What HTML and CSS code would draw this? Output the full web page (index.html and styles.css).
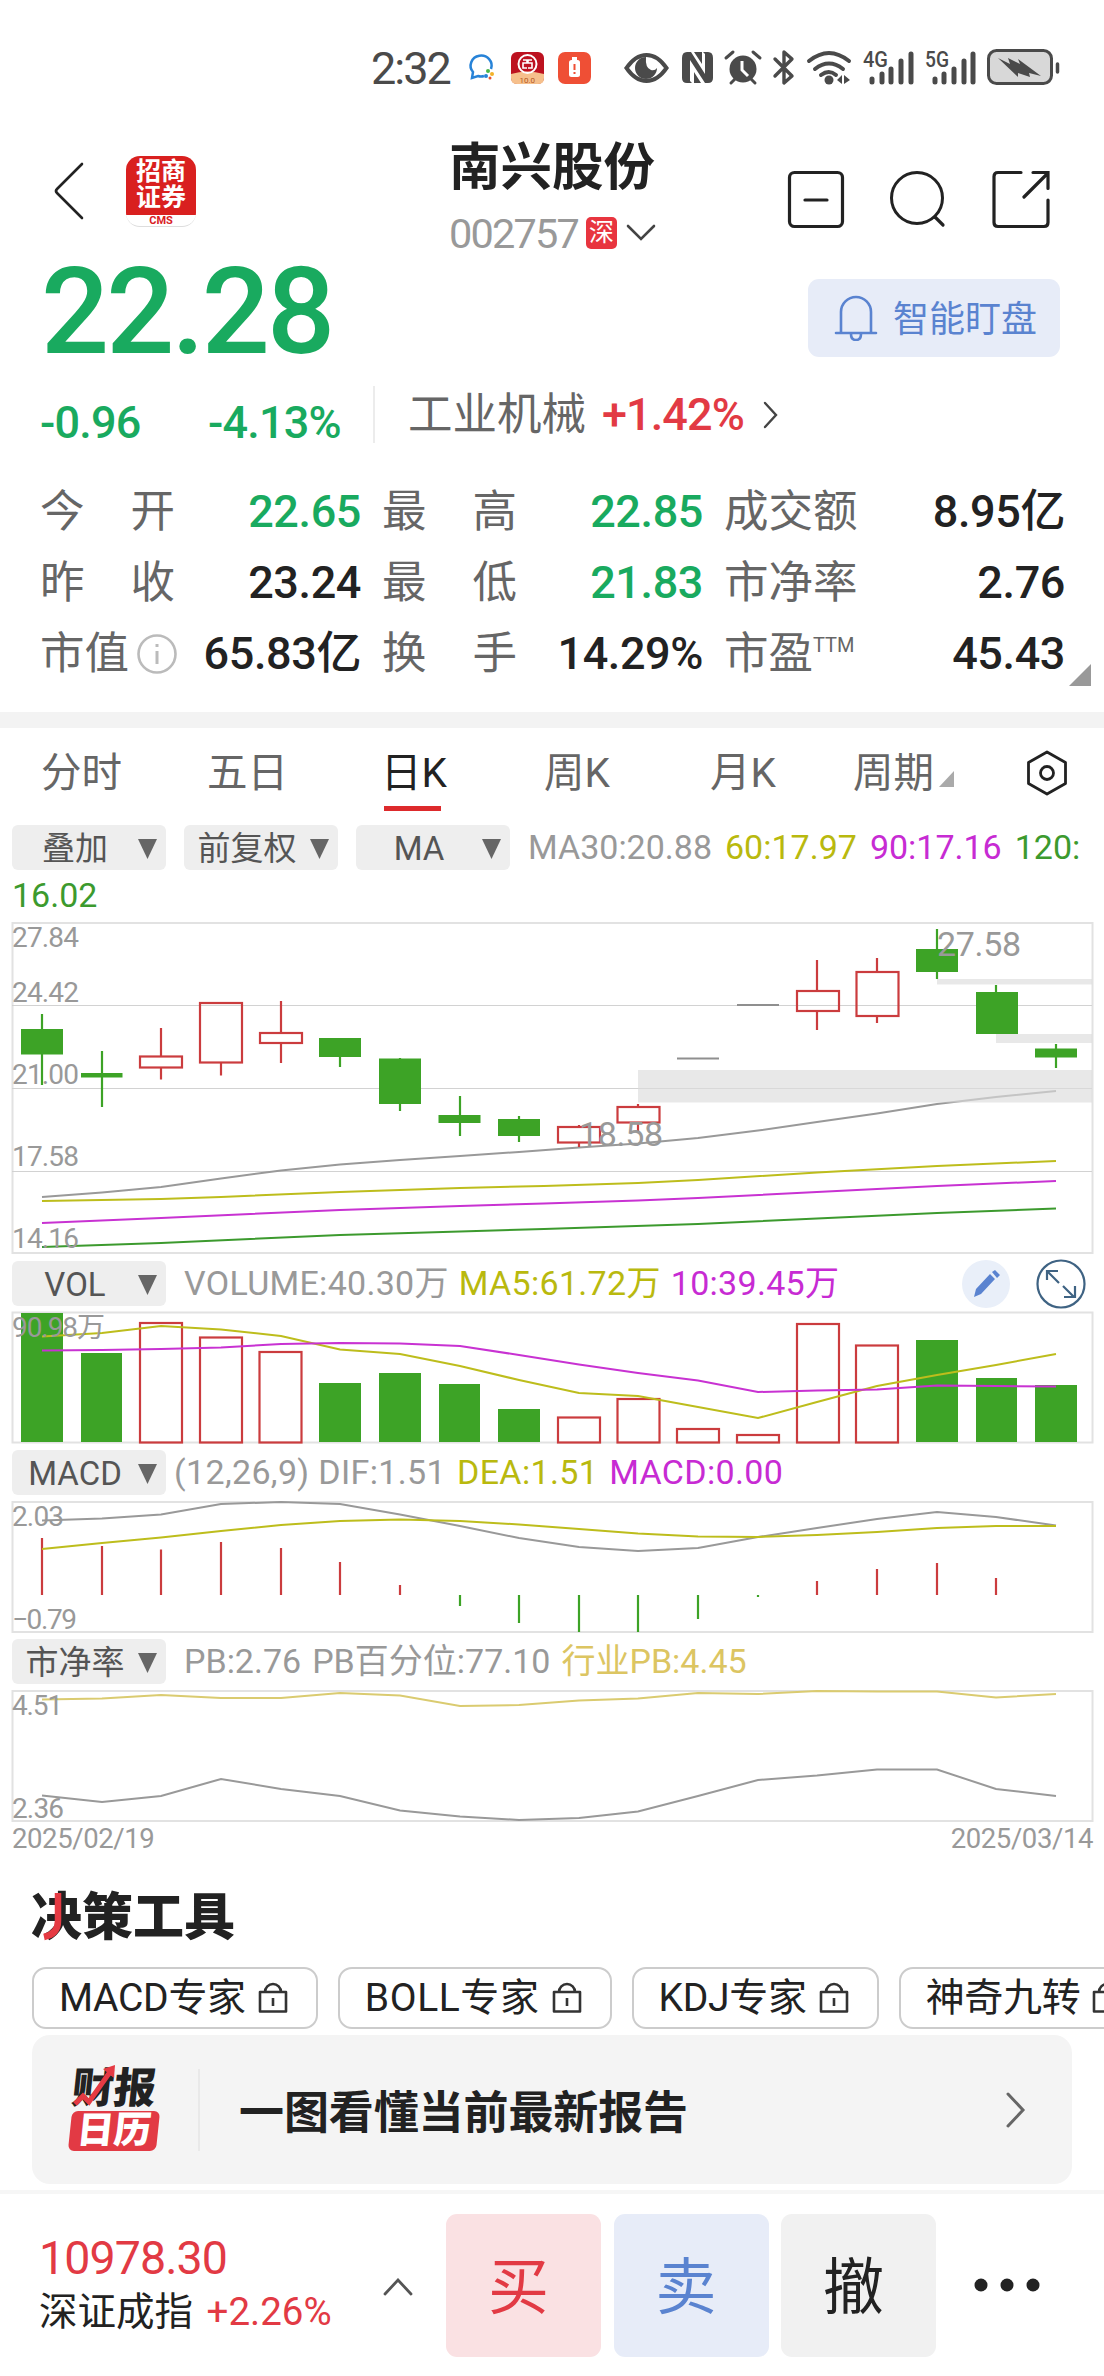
FILE: index.html
```html
<!DOCTYPE html>
<html lang="zh-CN">
<head>
  <meta charset="UTF-8">
  <title>南兴股份 002757</title>
  <link rel="stylesheet" href="styles.css">
</head>
<body>
  <!-- 状态栏 -->
  <div class="status-bar">
    <span class="time">2:32</span>
    <svg width="688" height="56" viewBox="372 36 688 56">
      <!-- 消息 -->
      <path d="M484 76q-3 1-6 0l-6 2 1-6a10.500 10 0 1 1 18-3" fill="none" stroke="#2783d8" stroke-width="2.500"/>
      <circle cx="488" cy="71" r="2" fill="#4bb748"/><circle cx="492" cy="74" r="2" fill="#f3b229"/><circle cx="486" cy="76" r="2" fill="#2783d8"/><circle cx="490" cy="78" r="1.500" fill="#e6502e"/>
      <!-- 银行 -->
      <rect x="511" y="52" width="33" height="32" rx="6" fill="#bd1220"/>
      <path d="M511 74q16-5 33 0v4q0 6-6 6h-21q-6 0-6-6z" fill="#f6c08c"/>
      <circle cx="527.500" cy="64" r="9" fill="none" stroke="#fff" stroke-width="2"/>
      <path d="M523 60h4v3h-4v5h4M532 60h-4v3h4v5h-4" fill="none" stroke="#fff" stroke-width="1.600"/>
      <text x="519.500" y="83" class="mini">10.0</text>
      <!-- 电量提醒 -->
      <rect x="558" y="52" width="33" height="32" rx="7" fill="#ef4f35"/>
      <rect x="569" y="60" width="11" height="17" rx="2.500" fill="#fff"/><rect x="572" y="57" width="5" height="4" fill="#fff"/>
      <path d="M574.500 64v6M574.500 72v2" stroke="#ef4f35" stroke-width="2"/>
      <g fill="#4a4a4a">
        <path fill-rule="evenodd" d="M624 68q10-15 22.500-15t22.500 15q-10 15-22.500 15t-22.500-15zm5 0q8 11 17.500 11t17.500-11q-8-11-17.500-11t-17.500 11z"/>
        <path d="M646 57a11 11 0 1 0 11 11q-2 3-6 2-6-2-5-13z"/>
        <!-- NFC -->
        <path d="M687 52h4l14 22V54l-2-2h5q5 0 5 6v20q0 5-5 5h-3l-15-23v21l2 2h-5q-5 0-5-5V58q0-6 5-6z"/>
        <path d="M694 52h8v12zM694 83h7l-7-11z"/>
        <!-- 闹钟 -->
        <circle cx="743" cy="69" r="13.500"/>
        <path d="M726 58l7-6M760 58l-7-6M731 83l4-4M755 83l-4-4" stroke="#4a4a4a" stroke-width="3" stroke-linecap="round"/>
        <path d="M742 61v9l6 6" fill="none" stroke="#fff" stroke-width="3"/>
      </g>
      <g fill="none" stroke="#4a4a4a" stroke-width="3.400" stroke-linejoin="round" stroke-linecap="round">
        <path d="M775 59l17 17-8 7V52l8 7-17 17"/>
        <path d="M809 61q20-16 40 0M815 69q14-11 28 0M821 75q8-6 15 0" stroke-width="4"/>
      </g>
      <g fill="#4a4a4a">
        <circle cx="829" cy="80" r="4.500"/><path d="M837 80l5-5v9zM850 80l-6-5v9z"/>
      </g>
      <g stroke="#4a4a4a" stroke-width="5" stroke-linecap="round">
        <path d="M872 79v3M882 74v8M891 69v13M901 61v21M911 54v28"/>
        <path d="M935 79v3M944 74v8M954 69v13M964 61v21M973 54v28"/>
      </g>
      <text x="863" y="67" class="net" textLength="25" lengthAdjust="spacingAndGlyphs">4G</text>
      <text x="925" y="67" class="net" textLength="24" lengthAdjust="spacingAndGlyphs">5G</text>
      <rect x="988.500" y="50.500" width="63" height="33" rx="8" fill="#d8d8d8" stroke="#4a4a4a" stroke-width="3"/>
      <path d="M998 58l12 6-2-6 12 6-2-5 23 17-12-3 1 4-12-4 0 4z" fill="#4a4a4a"/>
      <path d="M1057.500 64v8" stroke="#4a4a4a" stroke-width="3.500" stroke-linecap="round"/>
    </svg>
  </div>

  <!-- 顶部标题 -->
  <div class="header">
    <div class="header-left">
      <svg class="back" width="32" height="60" viewBox="0 0 32 60"><path d="M29 3L4 28q-2 2 0 4L29 57" fill="none" stroke="#222" stroke-width="2.600" stroke-linecap="round"/></svg>
      <div class="broker">
        <div class="broker-name">招商<br>证券</div>
        <div class="broker-en">CMS</div>
      </div>
    </div>
    <div class="header-title">
      <h1>南兴股份</h1>
      <div class="code"><span class="code-num">002757</span><span class="badge">深</span>
        <svg width="30" height="18" viewBox="0 0 30 18"><path d="M2 2l13 13L28 2" fill="none" stroke="#444" stroke-width="2.600" stroke-linecap="round"/></svg>
      </div>
    </div>
    <div class="header-actions">
      <svg width="58" height="60" viewBox="0 0 58 60"><rect x="2.500" y="2.500" width="53" height="54" rx="5" fill="none" stroke="#222" stroke-width="3.200"/><path d="M18 30h22" stroke="#222" stroke-width="3.200" stroke-linecap="round"/></svg>
      <svg width="58" height="60" viewBox="0 0 58 60"><circle cx="28" cy="28" r="25.500" fill="none" stroke="#222" stroke-width="3"/><path d="M46 47l8 8" stroke="#222" stroke-width="3.200" stroke-linecap="round"/></svg>
      <svg width="60" height="60" viewBox="0 0 60 60"><path d="M30 2.500H7q-4 0-4 4v46q0 4 4 4h46q4 0 4-4V30M42 2.500h15v16M56 4L33 27" fill="none" stroke="#222" stroke-width="3.200" stroke-linecap="round"/></svg>
    </div>
  </div>

  <!-- 价格 -->
  <div class="price-row">
    <div class="price">22.28</div>
    <button class="watch" type="button">
      <svg width="44" height="46" viewBox="0 0 44 46"><path d="M7 37V17a15 15 0 0 1 30 0v20M2 38h40M17 39q0 6 5 6t5-6" fill="none" stroke="#5a83d0" stroke-width="2.600" stroke-linecap="round"/></svg>
      <span>智能盯盘</span>
    </button>
  </div>
  <div class="change-row">
    <span class="change down">-0.96</span>
    <span class="change-pct down">-4.13%</span>
    <a class="sector">
      <span class="sector-name">工业机械</span>
      <span class="sector-pct">+1.42%</span>
      <svg width="16" height="28" viewBox="0 0 16 28"><path d="M2 2l11 12L2 26" fill="none" stroke="#444" stroke-width="2.400" stroke-linecap="round"/></svg>
    </a>
  </div>

  <!-- 行情数据 -->
  <div class="stats">
    <div class="stat"><span class="label"><span>今</span><span>开</span></span><b class="down">22.65</b></div>
    <div class="stat"><span class="label"><span>最</span><span>高</span></span><b class="down">22.85</b></div>
    <div class="stat"><span class="label"><span>成交额</span></span><b>8.95亿</b></div>
    <div class="stat"><span class="label"><span>昨</span><span>收</span></span><b>23.24</b></div>
    <div class="stat"><span class="label"><span>最</span><span>低</span></span><b class="down">21.83</b></div>
    <div class="stat"><span class="label"><span>市净率</span></span><b>2.76</b></div>
    <div class="stat"><span class="label"><span>市值</span>
      <svg width="42" height="42" viewBox="0 0 42 42"><circle cx="21" cy="21" r="18.500" fill="none" stroke="#bbb" stroke-width="2.600"/><path d="M21 18v13M21 11v3" stroke="#bbb" stroke-width="3"/></svg>
    </span><b>65.83亿</b></div>
    <div class="stat"><span class="label"><span>换</span><span>手</span></span><b>14.29%</b></div>
    <div class="stat"><span class="label"><span>市盈</span><span class="ttm">TTM</span></span><b>45.43</b></div>
    <span class="more-corner"></span>
  </div>

  <!-- 周期切换 -->
  <div class="tabs">
    <span class="tab">分时</span>
    <span class="tab">五日</span>
    <span class="tab active">日K</span>
    <span class="tab">周K</span>
    <span class="tab">月K</span>
    <span class="tab">周期<i class="corner"></i></span>
    <svg width="44" height="48" viewBox="0 0 44 48"><path d="M22 3l18.500 10.500v21L22 45 3.500 34.500v-21z" fill="none" stroke="#222" stroke-width="2.800" stroke-linejoin="round"/><circle cx="22" cy="24" r="6.500" fill="none" stroke="#222" stroke-width="2.800"/></svg>
  </div>

  <!-- K线 -->
  <div class="indicator">
    <span class="chip">叠加</span>
    <span class="chip">前复权</span>
    <span class="chip">MA</span>
    <div class="values"><span class="gray">MA30:20.88</span><span class="yellow">60:17.97</span><span class="purple">90:17.16</span><span class="green">120:</span></div>
  </div>
  <div class="indicator-wrap green">16.02</div>
  <svg class="chart" width="1104" height="341" viewBox="0 920 1104 341">
    <rect x="12.500" y="923" width="1080" height="330" class="frame"/>
    <path d="M12 1005.500h1080M12 1088.500h1080M12 1171.500h1080" class="grid"/>
    <polyline class="ma gray-line" points="42,1197 102,1192.500 161,1187 221,1178.500 281,1170.500 340,1164.500 400,1160 460,1156 519,1152 579,1147.500 638,1143.500 698,1138 758,1130.500 817,1122 877,1113.500 937,1104 996,1097 1056,1091"/>
    <polyline class="ma yellow-line" points="42,1201 161,1199 221,1197 340,1192 460,1188 544,1186 638,1183 698,1180 817,1172.500 937,1166 1056,1161"/>
    <polyline class="ma purple-line" points="42,1223 161,1218 340,1210 460,1206 544,1203.500 638,1200.500 698,1198 817,1192 937,1186 1056,1181"/>
    <polyline class="ma green-line" points="42,1247 161,1243 340,1235 460,1231.500 544,1229 698,1224 817,1218.500 937,1213 1056,1208.500"/>
    <!-- 跳空缺口 -->
    <g class="gap">
      <rect x="638" y="1070" width="454" height="32.500"/>
      <rect x="937" y="979" width="155" height="5.500"/>
      <rect x="996" y="1034" width="96" height="9"/>
    </g>
    <g class="up">
      <path d="M161 1028v28.500M161 1067.500v12M221 1062.500v13M281 1001v32M281 1043v20M579 1125v2M579 1142v5M638 1104v3M638 1122.500v9.500M817 960v31M817 1011v19M877 958v14M877 1016v7"/>
      <rect x="140" y="1056.500" width="42" height="11"/>
      <rect x="200" y="1003" width="42" height="59.500"/>
      <rect x="260" y="1033" width="42" height="10"/>
      <rect x="558" y="1127" width="42" height="15.500"/>
      <rect x="617.500" y="1107" width="42" height="15.500"/>
      <rect x="797" y="991" width="42" height="20"/>
      <rect x="856.500" y="972" width="42" height="44"/>
    </g>
    <g class="dn">
      <path d="M42 1014v71M102 1051v56M340 1040v27M400 1058v53M460 1096v40M519 1116v26M937 929v50M996 985v40M1056 1044v24"/>
      <rect x="21" y="1029" width="42" height="25.500"/>
      <rect x="81" y="1073" width="41.500" height="4.500"/>
      <rect x="319" y="1038" width="42" height="19"/>
      <rect x="379" y="1058.500" width="42" height="45.500"/>
      <rect x="438.500" y="1115" width="42" height="8"/>
      <rect x="498" y="1119" width="42" height="17"/>
      <rect x="916" y="949" width="42" height="23"/>
      <rect x="976" y="992" width="42" height="42"/>
      <rect x="1035" y="1048.500" width="42" height="9"/>
    </g>
    <path d="M677 1058.500h42M737 1005h42" stroke="#8f8f8f" stroke-width="2"/>
    <g class="axis">
      <text x="12" y="947" textLength="67">27.84</text>
      <text x="12" y="1002" textLength="67">24.42</text>
      <text x="12" y="1084" textLength="67">21.00</text>
      <text x="12" y="1166" textLength="67">17.58</text>
      <text x="12" y="1248" textLength="67">14.16</text>
    </g>
    <text class="extreme" x="937" y="956" textLength="84">27.58</text>
    <text class="extreme" x="579" y="1146" textLength="84">18.58</text>
  </svg>

  <!-- 成交量 -->
  <div class="indicator">
    <span class="chip">VOL</span>
    <div class="values vol"><span class="gray">VOLUME:40.30万</span><span class="yellow">MA5:61.72万</span><span class="purple">10:39.45万</span></div>
    <div class="tools">
      <svg width="48" height="48" viewBox="0 0 48 48"><circle cx="24" cy="24" r="24" fill="#e9eff9"/><path d="M12 37l2-8 14-15 5 5-14 15zM30 12l3-2 5 5-3 3z" fill="#5a83d0"/></svg>
      <svg width="50" height="50" viewBox="0 0 50 50"><g fill="none" stroke="#3f6383" stroke-width="2.200"><circle cx="25" cy="25" r="23.500"/><path d="M11 21v-9h11M12 13l11 11M27 27l11 11M39 27v11H28"/></g></svg>
    </div>
  </div>
  <svg class="chart" width="1104" height="144" viewBox="0 1306 1104 144">
    <rect x="12.500" y="1312.500" width="1080" height="130" class="frame"/>
    <g class="dn">
      <rect x="21" y="1313" width="42" height="129"/><rect x="81" y="1353" width="41" height="89"/>
      <rect x="319" y="1383" width="42" height="59"/><rect x="379" y="1373" width="42" height="69"/><rect x="439" y="1384" width="41" height="58"/><rect x="498" y="1409" width="42" height="33"/>
      <rect x="916" y="1340" width="42" height="102"/><rect x="976" y="1378" width="41" height="64"/><rect x="1035" y="1385" width="42" height="57"/>
    </g>
    <g class="up">
      <rect x="140" y="1323" width="42" height="119.500"/><rect x="200" y="1337.500" width="42" height="105"/><rect x="259.500" y="1352" width="42" height="90.500"/>
      <rect x="558" y="1417.500" width="42" height="25"/><rect x="617.500" y="1399" width="42" height="43.500"/><rect x="677" y="1429" width="42" height="13.500"/><rect x="737" y="1435" width="42" height="7.500"/>
      <rect x="797" y="1324" width="42" height="118.500"/><rect x="856" y="1345.500" width="42" height="97"/>
    </g>
    <polyline class="ma yellow-line" points="42,1336.500 102,1333 161,1326 221,1329.500 281,1336 340,1349.500 400,1354 460,1366 519,1380 579,1393 638,1396 698,1407 758,1418 817,1402 877,1386 937,1375 996,1365 1056,1354"/>
    <polyline class="ma purple-line" points="42,1350.500 102,1350 161,1349 221,1347.500 281,1344 340,1343 400,1343.500 460,1346 519,1355 579,1364.500 638,1373 698,1380.500 758,1392 817,1390.500 877,1389.500 937,1385.500 996,1386 1056,1386.500"/>
    <text class="axis" x="12" y="1337" textLength="93">90.98万</text>
  </svg>

  <!-- MACD -->
  <div class="indicator">
    <span class="chip">MACD</span>
    <div class="values macd"><span class="gray">(12,26,9) DIF:1.51</span><span class="yellow">DEA:1.51</span><span class="purple">MACD:0.00</span></div>
  </div>
  <svg class="chart" width="1104" height="144" viewBox="0 1495 1104 144">
    <rect x="12.500" y="1502" width="1080" height="130" class="frame"/>
    <path class="up" d="M42 1595v-57M102 1595v-49M161 1595v-45.500M221 1595v-53M281 1595v-47M340 1595v-33M400 1595v-10M817 1595v-14M877 1595v-26M937 1595v-32M996 1595v-17"/>
    <path class="dn" d="M460 1595v11M519 1595v28M579 1595v37M638 1595v37M698 1595v24M758 1595v2"/>
    <polyline class="ma gray-line" points="42,1520.500 102,1518.500 161,1514.500 221,1504 281,1502 340,1504 400,1514.500 460,1526 519,1538 579,1547 638,1551 698,1548 758,1537 817,1528 877,1519 937,1512 996,1517 1056,1525.500"/>
    <polyline class="ma yellow-line" points="42,1549 102,1543 161,1537.500 221,1531 281,1525 340,1521 400,1519.500 460,1521 519,1524.500 579,1529 638,1533.500 698,1536.500 758,1537 817,1535 877,1532 937,1528 996,1526 1056,1526"/>
    <text class="axis" x="12" y="1526" textLength="52">2.03</text>
    <text class="axis" x="12" y="1629" textLength="65">−0.79</text>
  </svg>

  <!-- 市净率 -->
  <div class="indicator">
    <span class="chip">市净率</span>
    <div class="values pb"><span class="gray">PB:2.76</span><span class="gray">PB百分位:77.10</span><span class="gold">行业PB:4.45</span></div>
  </div>
  <svg class="chart" width="1104" height="140" viewBox="0 1684 1104 140">
    <rect x="12.500" y="1691" width="1080" height="130" class="frame"/>
    <polyline class="ma gold-line" points="42,1699.500 102,1698.500 161,1695 221,1698 281,1698 340,1693 400,1695.500 460,1706 519,1705 579,1700.500 638,1698.500 698,1693 758,1694 817,1691 877,1691.500 937,1691.500 996,1697.500 1056,1694"/>
    <polyline class="ma gray-line" points="42,1795.500 102,1802 161,1796 221,1779 281,1789 340,1796 400,1810.500 460,1816.500 519,1820 579,1818 638,1811.500 698,1796 758,1780 817,1775.500 877,1769.500 937,1769.500 996,1789 1056,1796"/>
    <text class="axis" x="12" y="1715" textLength="51">4.51</text>
    <text class="axis" x="12" y="1818" textLength="52">2.36</text>
  </svg>
  <div class="dates"><span>2025/02/19</span><span>2025/03/14</span></div>

  <!-- 决策工具 -->
  <h2 class="tools-title">决策工具
    <svg class="tools-stroke" width="20" height="50" viewBox="0 0 20 50"><path d="M15 0v28q0 13-14 16" fill="none" stroke="#e53a43" stroke-width="6.500"/></svg>
  </h2>
  <div class="experts">
    <span class="expert">MACD专家<svg class="lock" viewBox="0 0 30 34"><path d="M2 12h26v19.500H2zM7 12a8 8 0 0 1 16 0M15 18v8"/></svg></span>
    <span class="expert boll">BOLL专家<svg class="lock" viewBox="0 0 30 34"><path d="M2 12h26v19.500H2zM7 12a8 8 0 0 1 16 0M15 18v8"/></svg></span>
    <span class="expert">KDJ专家<svg class="lock" viewBox="0 0 30 34"><path d="M2 12h26v19.500H2zM7 12a8 8 0 0 1 16 0M15 18v8"/></svg></span>
    <span class="expert">神奇九转<svg class="lock" viewBox="0 0 30 34"><path d="M2 12h26v19.500H2zM7 12a8 8 0 0 1 16 0M15 18v8"/></svg></span>
  </div>
  <div class="report">
    <div class="report-logo">
      <span class="logo-top">财报</span>
      <span class="logo-bottom">日历</span>
      <svg class="logo-arrow" width="46" height="42" viewBox="0 0 46 42"><path d="M2 40l8-8 6 6L37 8" fill="none" stroke="#e53a43" stroke-width="5"/><path d="M30 5l12-4-1 13z" fill="#e53a43"/></svg>
    </div>
    <span class="report-text">一图看懂当前最新报告</span>
    <svg width="20" height="36" viewBox="0 0 20 36"><path d="M2 2l15 16L2 34" fill="none" stroke="#666" stroke-width="3" stroke-linecap="round"/></svg>
  </div>

  <!-- 底部交易栏 -->
  <div class="footer">
    <div class="index">
      <div class="index-value">10978.30</div>
      <div class="index-name">深证成指 <span>+2.26%</span></div>
    </div>
    <svg class="caret" width="30" height="18" viewBox="0 0 30 18"><path d="M2 16L15 2l13 14" fill="none" stroke="#555" stroke-width="2.800" stroke-linecap="round"/></svg>
    <div class="trade buy">买</div>
    <div class="trade sell">卖</div>
    <div class="trade cancel">撤</div>
    <svg class="dots" width="66" height="14" viewBox="0 0 66 14" fill="#222"><circle cx="7" cy="7" r="6.500"/><circle cx="33" cy="7" r="6.500"/><circle cx="59" cy="7" r="6.500"/></svg>
  </div>
</body>
</html>
```

FILE: styles.css
```css
:root {
  --text: #222;
  --muted: #666;
  --gray: #999;
  --red: #e23a44;
  --green: #19aa5f;
  --blue: #5a83d0;
  --k-green: #3da326;
  --k-red: #cb3c3e;
}
* {
  box-sizing: border-box;
}
body {
  width: 1104px;
  height: 2376px;
  margin: 0;
  overflow: hidden;
  background: #fff;
  color: var(--text);
  font-family: Roboto, "Noto Sans CJK SC", sans-serif;
}
svg {
  display: block;
  flex: none;
}
.down {
  color: var(--green);
}

/* 状态栏 */
.status-bar {
  height: 130px;
  padding: 36px 0 0 372px;
  display: grid;
}
.status-bar > * {
  grid-area: 1 / 1;
}
.time {
  font-size: 45px;
  line-height: 42px;
  letter-spacing: -2px;
  margin: 12px 0 0 -1px;
  color: #4a4a4a;
}
.mini {
  font-size: 8px;
  fill: #b5581e;
}
.net {
  font-size: 22px;
  font-weight: 500;
  fill: #4a4a4a;
}

/* 标题 */
.header {
  height: 126px;
  padding: 0 53px;
  display: grid;
  grid-template-columns: 396px 1fr 264px;
}
.header-left {
  display: flex;
  align-items: flex-start;
  padding-top: 26px;
  gap: 41px;
}
.back {
  margin-top: 5px;
}
.broker {
  width: 70px;
  height: 71px;
  border-radius: 14px;
  overflow: hidden;
  background: #fff;
  border-bottom: 1px solid #ddd;
  text-align: center;
}
.broker-name {
  height: 59px;
  background: #d9201f;
  color: #fff;
  font-size: 25px;
  font-weight: 700;
  line-height: 26px;
  padding-top: 3px;
}
.broker-en {
  font-size: 11px;
  font-weight: 700;
  line-height: 12px;
  color: #d9201f;
}
h1 {
  margin: 8px 0 0;
  font-size: 51.5px;
  line-height: 60px;
  font-weight: 700;
}
.code {
  display: flex;
  align-items: center;
  height: 60px;
  margin-top: 5px;
}
.code-num {
  width: 137px;
  font-size: 41.5px;
  letter-spacing: -1.8px;
  color: var(--gray);
}
.badge {
  width: 31px;
  height: 32px;
  margin-right: 9px;
  border-radius: 5px;
  background: #e8353f;
  color: #fff;
  font-size: 25px;
  line-height: 31px;
  text-align: center;
}
.header-actions {
  display: flex;
  justify-content: space-between;
  padding-top: 40px;
}

/* 价格 */
.price-row {
  height: 106px;
  padding: 0 44px 0 41px;
  display: flex;
  justify-content: space-between;
  align-items: flex-start;
}
.price {
  font-size: 120px;
  line-height: 112px;
  font-weight: 500;
  letter-spacing: -3px;
  color: var(--green);
}
.watch {
  width: 252px;
  height: 78px;
  margin-top: 23px;
  padding: 0 0 0 26px;
  display: flex;
  align-items: center;
  gap: 15px;
  border: none;
  border-radius: 11px;
  background: #e7ecf8;
  color: var(--blue);
  font: 36px "Noto Sans CJK SC", sans-serif;
}
.watch span {
  margin-top: -5px;
}
.change-row {
  height: 112px;
  padding: 24px 0 0 40px;
  display: flex;
  font-size: 45px;
  font-weight: 500;
  line-height: 74px;
}
.change,
.change-pct {
  letter-spacing: -0.8px;
}
.change {
  width: 168px;
}
.change-pct {
  width: 165px;
}
.sector {
  height: 57px;
  padding-left: 33px;
  border-left: 2px solid #ececec;
  display: flex;
  align-items: center;
}
.sector-name {
  width: 194px;
  font-size: 44.5px;
  font-weight: 400;
  color: var(--muted);
}
.sector-pct {
  width: 161px;
  letter-spacing: -0.9px;
  color: var(--red);
}

/* 行情数据 */
.stats {
  position: relative;
  height: 238px;
  padding: 2px 39px 23px 40px;
  display: grid;
  grid-template-columns: 321px 321px 341px;
  grid-auto-rows: 71px;
  column-gap: 21px;
}
.stat {
  display: flex;
  justify-content: space-between;
  align-items: center;
  font-size: 45px;
  line-height: 70px;
}
.stat b {
  font-weight: 500;
  letter-spacing: -0.4px;
}
.label {
  width: 135px;
  display: flex;
  justify-content: space-between;
  align-items: center;
  font-size: 44.5px;
  color: var(--muted);
}
.label svg {
  margin-right: -3px;
}
.ttm {
  flex: 1;
  align-self: flex-start;
  font-size: 20px;
  line-height: 52px;
}
.more-corner {
  position: absolute;
  left: 1069px;
  bottom: 26px;
  width: 22px;
  height: 22px;
  background: #999;
  clip-path: polygon(100% 0, 100% 100%, 0 100%);
}

/* 周期切换 */
.tabs {
  height: 113px;
  padding-left: 41px;
  border-top: 16px solid #f3f3f3;
  display: grid;
  grid-template-columns: 166px 174px 163px 166px 143px 172px 44px;
  align-items: start;
}
.tabs svg {
  margin-top: 21px;
}
.tab {
  height: 83px;
  font-size: 40.5px;
  line-height: 90px;
  color: var(--muted);
}
.tab.active {
  color: var(--text);
  background: linear-gradient(#dd2a2c, #dd2a2c) no-repeat 3px 100% / 57px 5px;
}
.corner {
  display: inline-block;
  width: 15px;
  height: 16px;
  margin-left: 5px;
  background: #aaa;
  clip-path: polygon(100% 0, 100% 100%, 0 100%);
}

/* 指标行 */
.indicator {
  height: 45px;
  padding: 0 18px 0 12px;
  display: flex;
  align-items: center;
  gap: 18px;
}
.chip {
  flex: none;
  width: 154px;
  height: 45px;
  padding: 0 41px 0 13px;
  border-radius: 6px;
  background: #eee;
  position: relative;
  font-size: 33px;
  line-height: 47px;
  text-align: center;
  white-space: nowrap;
  color: #555;
}
.chip::after {
  content: "";
  position: absolute;
  right: 9px;
  top: 14px;
  width: 19px;
  height: 20px;
  background: #666;
  clip-path: polygon(0 0, 100% 0, 50% 100%);
}
.values {
  display: flex;
  gap: 13px;
  font-size: 34px;
  line-height: 47px;
  white-space: nowrap;
}
.values.vol {
  gap: 10px;
  letter-spacing: 0.3px;
}
.values.macd {
  gap: 11px;
  margin-left: -10px;
  letter-spacing: 0.35px;
}
.values.pb {
  gap: 11px;
}
.gray { color: #999; }
.yellow { color: #b9b90e; }
.purple { color: #c72bd3; }
.green { color: #3c9a2e; }
.gold { color: #dcc562; }
.indicator-wrap {
  height: 50px;
  padding-left: 12px;
  font-size: 34px;
  line-height: 50px;
}
.tools {
  display: flex;
  align-items: center;
  gap: 26px;
  margin-left: auto;
}

/* 图表 */
.frame {
  fill: none;
  stroke: #e2e2e2;
  stroke-width: 2;
}
.grid {
  stroke: #d2d2d2;
  stroke-width: 1.2;
}
.ma {
  fill: none;
  stroke-width: 2;
}
.gray-line { stroke: #999; }
.yellow-line { stroke: #bdbd1c; }
.purple-line { stroke: #c832d2; }
.green-line { stroke: #3c9a2e; }
.gold-line { stroke: #dacb70; }
.gap {
  fill: #dcdcdc;
  opacity: 0.65;
}
.up {
  fill: none;
  stroke: var(--k-red);
  stroke-width: 2.2;
}
.dn {
  fill: var(--k-green);
}
.dn path,
path.dn {
  stroke: var(--k-green);
  stroke-width: 2.2;
}
.axis {
  font-size: 28px;
  fill: #999;
}
.extreme {
  font-size: 34px;
  fill: #999;
}
.dates {
  height: 57px;
  padding: 0 11px 0 12px;
  display: flex;
  justify-content: space-between;
  font-size: 27.5px;
  line-height: 29px;
  letter-spacing: -0.4px;
  color: var(--gray);
}

/* 决策工具 */
.tools-title {
  position: relative;
  height: 86px;
  margin: 0;
  padding-left: 31px;
  font-size: 51px;
  line-height: 74px;
  font-weight: 900;
}
.tools-stroke {
  position: absolute;
  left: 43px;
  top: 12px;
}
.experts {
  display: flex;
  gap: 20px;
  padding-left: 32px;
  overflow: hidden;
}
.expert {
  flex: none;
  height: 62px;
  padding: 0 28px 0 25px;
  border: 2px solid #ccc;
  border-radius: 14px;
  display: flex;
  align-items: center;
  font-size: 39px;
  line-height: 60px;
  letter-spacing: -0.3px;
}
.expert.boll {
  letter-spacing: 0.6px;
}
.lock {
  width: 30px;
  height: 34px;
  margin: -2px 0 0 12px;
  fill: none;
  stroke: #333;
  stroke-width: 2.6;
  stroke-linejoin: round;
}
.report {
  height: 149px;
  margin: 6px 32px 0;
  padding: 0 46px 0 38px;
  border-radius: 18px;
  background: #f4f4f4;
  display: flex;
  align-items: center;
}
.report-logo {
  position: relative;
  width: 130px;
  height: 82px;
  border-right: 2px solid #e9e9e9;
  font-size: 42px;
  font-weight: 900;
}
.logo-top,
.logo-bottom {
  display: block;
  width: 88px;
  line-height: 40px;
  text-align: center;
  transform: skewX(-6deg);
}
.logo-bottom {
  margin-top: 2px;
  border-radius: 6px;
  background: var(--red);
  color: #fff;
  font-size: 37px;
}
.logo-arrow {
  position: absolute;
  left: 3px;
  top: -5px;
}
.report-text {
  flex: 1;
  padding-left: 39px;
  font-size: 45px;
  font-weight: 700;
  letter-spacing: -0.1px;
}

/* 底部交易栏 */
.footer {
  height: 186px;
  margin-top: 6px;
  padding: 20px 0 0 39px;
  border-top: 4px solid #f6f6f6;
  display: flex;
}
.index {
  width: 344px;
  padding-top: 15px;
}
.index-value {
  font-size: 46.5px;
  line-height: 58px;
  letter-spacing: -0.9px;
  color: var(--red);
}
.index-name {
  font-size: 38.5px;
  line-height: 50px;
  white-space: nowrap;
}
.index-name span {
  color: var(--red);
  margin-left: 4px;
}
.caret {
  margin-top: 64px;
}
.trade {
  width: 155px;
  height: 143px;
  margin-left: 12.5px;
  padding-right: 10px;
  border-radius: 11px;
  font-size: 61px;
  line-height: 148px;
  text-align: center;
}
.buy {
  margin-left: 33px;
  background: #fae1e3;
  color: var(--red);
}
.sell {
  background: #e7ecf8;
  color: var(--blue);
}
.cancel {
  background: #f1f1f1;
}
.dots {
  margin: 64px 0 0 38px;
}
```
